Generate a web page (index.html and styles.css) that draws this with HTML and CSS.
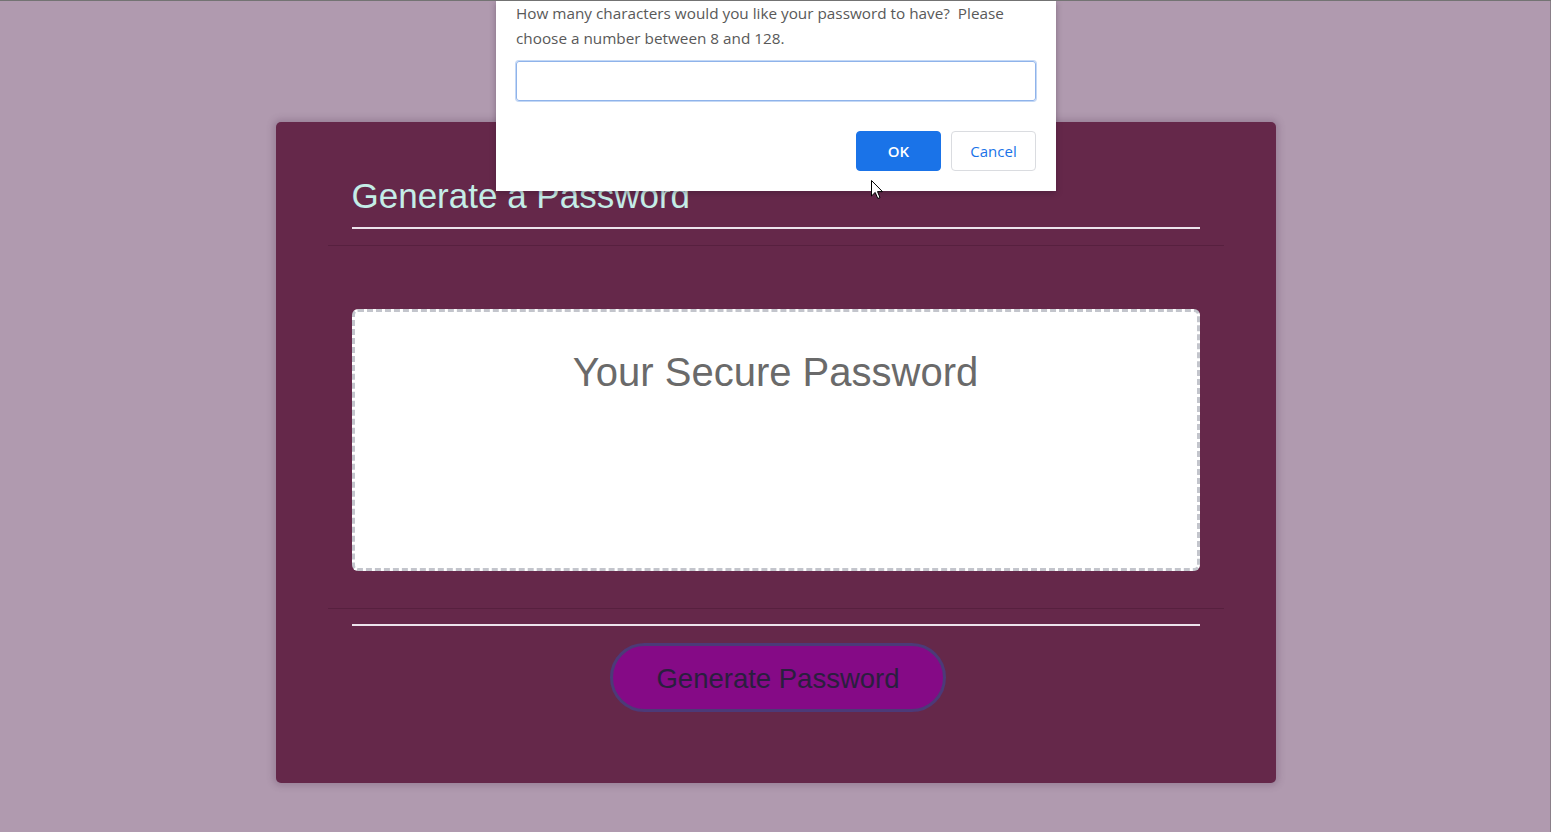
FILE: index.html
```html
<!DOCTYPE html>
<html lang="en">
<head>
<meta charset="utf-8">
<title>Password Generator</title>
<link rel="stylesheet" href="styles.css">
</head>
<body>
  <div class="wrapper">
    <div class="card">
      <div class="card-header">
        <h2 class="title">Generate a Password</h2>
      </div>
      <div class="card-body">
        <div class="password-box">Your Secure Password</div>
      </div>
      <div class="card-footer">
        <button class="btn-generate">Generate Password</button>
      </div>
    </div>
  </div>

  <div class="dialog">
    <p class="dialog-msg">How many characters would you like your password to have?&nbsp; Please choose a number between 8 and 128.</p>
    <div class="dialog-input"></div>
    <div class="dialog-actions">
      <button class="dlg-btn dlg-ok">OK</button>
      <button class="dlg-btn dlg-cancel">Cancel</button>
    </div>
  </div>

  <svg class="cursor" width="13" height="20" viewBox="0 0 13 20">
    <path d="M0.5 0.5 L0.5 16 L4.2 12.4 L6.8 18.5 L9 17.6 L6.5 11.6 L11.5 11.6 Z" fill="#fff" stroke="#000" stroke-width="1"/>
  </svg>
</body>
</html>
```
FILE: styles.css
```css
html, body {
  margin: 0;
  padding: 0;
}
body {
  background: #b09aaf;
  border-top: 1px solid #737373;
  box-shadow: inset -1px 0 0 #8a7f89;
  height: 832px;
  box-sizing: border-box;
  font-family: "Liberation Sans", Arial, sans-serif;
  position: relative;
  overflow: hidden;
}
.wrapper {
  padding-top: 121px;
}
.card {
  width: 1000px;
  margin: 0 auto;
  background: #65284a;
  border-radius: 5px;
  box-shadow: 0 0 6px 3px rgba(90, 60, 90, 0.25);
  padding-top: 53px;
  box-sizing: border-box;
  height: 661px;
}
.card-header {
  margin: 0 52px;
  padding: 0 24px 16px;
  border-bottom: 1px solid #57203f;
}
.title {
  margin: 0;
  font-weight: normal;
  font-size: 35px;
  line-height: 42px;
  color: #c4ede7;
  padding-bottom: 10px;
  border-bottom: 2px solid #ece4ec;
}
.card-body {
  margin: 0 52px;
  padding: 63px 24px 37px;
  border-bottom: 1px solid #57203f;
}
.password-box {
  height: 262px;
  box-sizing: border-box;
  background: #fff;
  border: 3px dashed #c3c5cc;
  border-radius: 6px;
  text-align: center;
  font-size: 40px;
  line-height: 46px;
  color: #6a6a6a;
  padding-top: 37px;
}
.card-footer {
  margin: 15px 76px 0;
  border-top: 2px solid #ece4ec;
  padding-top: 17px;
  display: flex;
  justify-content: center;
}
.btn-generate {
  width: 336px;
  height: 69px;
  margin-left: 5px;
  border: 3px solid #4c3a78;
  border-radius: 35px;
  background: #850a86;
  color: #2a1f3e;
  font-family: "Liberation Sans", Arial, sans-serif;
  font-size: 27.5px;
  padding: 2px 0 0;
}

.dialog {
  position: absolute;
  top: 0;
  left: 496px;
  width: 560px;
  height: 190px;
  box-sizing: border-box;
  background: #fff;
  padding: 0 20px;
  box-shadow: 0 2px 6px rgba(40, 20, 40, 0.35);
  font-family: "Open Sans", "Noto Sans", sans-serif;
}
.dialog-msg {
  margin: 0;
  font-size: 15.3px;
  line-height: 25px;
  color: #595959;
  width: 510px;
}
.dialog-input {
  margin-top: 10px;
  height: 40px;
  box-sizing: border-box;
  border: 1px solid #8fb3ea;
  box-shadow: 0 0 0 1px #c4d8f5;
  border-radius: 3px;
}
.dialog-actions {
  display: flex;
  justify-content: flex-end;
  gap: 10px;
  margin-top: 30px;
}
.dlg-btn {
  width: 85px;
  height: 40px;
  border-radius: 4px;
  font-family: "Open Sans", "Noto Sans", sans-serif;
  font-size: 15px;
  padding: 0;
}
.dlg-ok {
  background: #1a73e8;
  border: 1px solid #1a73e8;
  color: #fff;
  font-weight: 600;
}
.dlg-cancel {
  background: #fff;
  border: 1px solid #dadce0;
  color: #1a73e8;
}
.cursor {
  position: absolute;
  left: 871px;
  top: 179px;
}
```
